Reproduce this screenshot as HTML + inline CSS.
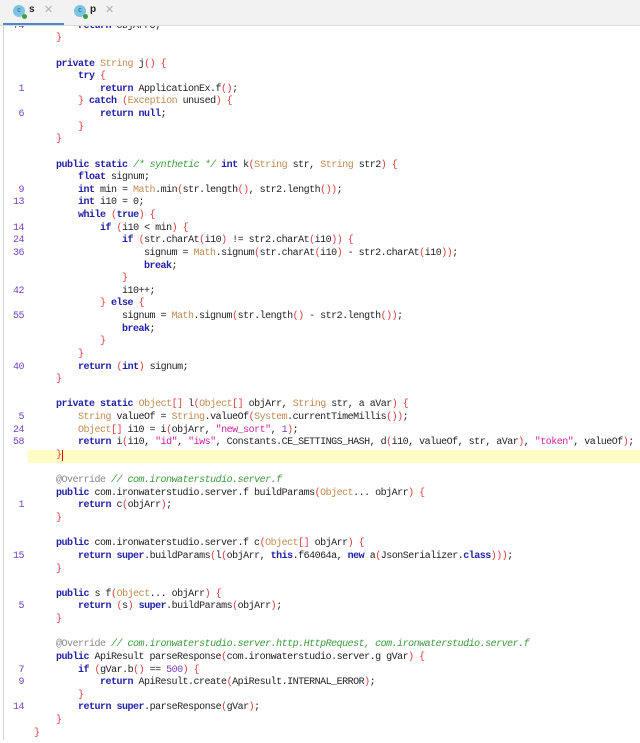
<!DOCTYPE html>
<html><head><meta charset="utf-8"><style>
body{margin:0;width:640px;height:743px;overflow:hidden;background:#fff;position:relative;font-family:"Liberation Mono",monospace}
#tabs{position:absolute;left:0;top:0;width:640px;height:25px;background:#f2f2f2;z-index:2;border-bottom:1px solid #d8d8d8;font-family:"Liberation Sans",sans-serif}
.tab{position:absolute;top:0;height:25px}
.ic{position:absolute;top:5px;width:12px;height:12px;border-radius:50%;background:#7cc4e4;font-size:7px;color:#2a5a80;text-align:center;line-height:12px}
.ic i{position:absolute;right:-2px;bottom:-2px;width:5px;height:5px;border-radius:50%;background:#3aa040}
.tl{position:absolute;top:4px;font-size:10px;font-weight:bold;color:#222}
.x{position:absolute;top:3px;font-size:11px;color:#b0b0b0}
#ul{position:absolute;left:3px;top:23px;width:61px;height:2px;background:#4a88c8}
#code{position:absolute;left:0;top:20.7px;width:640px;font-size:10px;letter-spacing:-0.5px;line-height:12.64px;color:#222}
.l{height:12.64px;position:relative;white-space:pre}
.g{position:absolute;left:0;width:24px;text-align:right;color:#7a3fc0}
.c0{position:absolute;left:12px}
.hl{background:#fdfdc4}
.k{color:#2222aa;font-weight:bold}.t{color:#c08a50}.p{color:#e03c3c}.s{color:#d020a0}.n{color:#7a3fc0}.c{color:#3a9a3a;font-style:italic}.a{color:#888}
#bd{position:absolute;left:3px;top:25px;width:1px;height:715px;background:#d0d0d0}
</style></head><body>
<div id="tabs">
<div class="tab" style="left:13px"><div class="ic">c<i></i></div><div class="tl" style="left:16px">s</div><div class="x" style="left:31px">✕</div></div>
<div class="tab" style="left:74px"><div class="ic">c<i></i></div><div class="tl" style="left:16px">p</div><div class="x" style="left:31px">✕</div></div>
<div id="ul"></div>
</div>
<div id="bd"></div>
<div id="code">
<div class="l"><span class="g">74</span><span class="c0">            <span class="k">return</span> objArr3;</span></div>
<div class="l"><span class="c0">        <span class="p">}</span></span></div>
<div class="l"></div>
<div class="l"><span class="c0">        <span class="k">private</span> <span class="t">String</span> j<span class="p">()</span> <span class="p">{</span></span></div>
<div class="l"><span class="c0">            <span class="k">try</span> <span class="p">{</span></span></div>
<div class="l"><span class="g">1</span><span class="c0">                <span class="k">return</span> ApplicationEx.f<span class="p">()</span>;</span></div>
<div class="l"><span class="c0">            <span class="p">}</span> <span class="k">catch</span> <span class="p">(</span><span class="t">Exception</span> unused<span class="p">)</span> <span class="p">{</span></span></div>
<div class="l"><span class="g">6</span><span class="c0">                <span class="k">return</span> <span class="k">null</span>;</span></div>
<div class="l"><span class="c0">            <span class="p">}</span></span></div>
<div class="l"><span class="c0">        <span class="p">}</span></span></div>
<div class="l"></div>
<div class="l"><span class="c0">        <span class="k">public</span> <span class="k">static</span> <span class="c">/* synthetic */</span> <span class="k">int</span> k<span class="p">(</span><span class="t">String</span> str, <span class="t">String</span> str2<span class="p">)</span> <span class="p">{</span></span></div>
<div class="l"><span class="c0">            <span class="k">float</span> signum;</span></div>
<div class="l"><span class="g">9</span><span class="c0">            <span class="k">int</span> min = <span class="t">Math</span>.min<span class="p">(</span>str.length<span class="p">()</span>, str2.length<span class="p">())</span>;</span></div>
<div class="l"><span class="g">13</span><span class="c0">            <span class="k">int</span> i10 = 0;</span></div>
<div class="l"><span class="c0">            <span class="k">while</span> <span class="p">(</span><span class="k">true</span><span class="p">)</span> <span class="p">{</span></span></div>
<div class="l"><span class="g">14</span><span class="c0">                <span class="k">if</span> <span class="p">(</span>i10 &lt; min<span class="p">)</span> <span class="p">{</span></span></div>
<div class="l"><span class="g">24</span><span class="c0">                    <span class="k">if</span> <span class="p">(</span>str.charAt<span class="p">(</span>i10<span class="p">)</span> != str2.charAt<span class="p">(</span>i10<span class="p">))</span> <span class="p">{</span></span></div>
<div class="l"><span class="g">36</span><span class="c0">                        signum = <span class="t">Math</span>.signum<span class="p">(</span>str.charAt<span class="p">(</span>i10<span class="p">)</span> - str2.charAt<span class="p">(</span>i10<span class="p">))</span>;</span></div>
<div class="l"><span class="c0">                        <span class="k">break</span>;</span></div>
<div class="l"><span class="c0">                    <span class="p">}</span></span></div>
<div class="l"><span class="g">42</span><span class="c0">                    i10++;</span></div>
<div class="l"><span class="c0">                <span class="p">}</span> <span class="k">else</span> <span class="p">{</span></span></div>
<div class="l"><span class="g">55</span><span class="c0">                    signum = <span class="t">Math</span>.signum<span class="p">(</span>str.length<span class="p">()</span> - str2.length<span class="p">())</span>;</span></div>
<div class="l"><span class="c0">                    <span class="k">break</span>;</span></div>
<div class="l"><span class="c0">                <span class="p">}</span></span></div>
<div class="l"><span class="c0">            <span class="p">}</span></span></div>
<div class="l"><span class="g">40</span><span class="c0">            <span class="k">return</span> <span class="p">(</span><span class="k">int</span><span class="p">)</span> signum;</span></div>
<div class="l"><span class="c0">        <span class="p">}</span></span></div>
<div class="l"></div>
<div class="l"><span class="c0">        <span class="k">private</span> <span class="k">static</span> <span class="t">Object</span><span class="p">[]</span> l<span class="p">(</span><span class="t">Object</span><span class="p">[]</span> objArr, <span class="t">String</span> str, a aVar<span class="p">)</span> <span class="p">{</span></span></div>
<div class="l"><span class="g">5</span><span class="c0">            <span class="t">String</span> valueOf = <span class="t">String</span>.valueOf<span class="p">(</span><span class="t">System</span>.currentTimeMillis<span class="p">())</span>;</span></div>
<div class="l"><span class="g">24</span><span class="c0">            <span class="t">Object</span><span class="p">[]</span> i10 = i<span class="p">(</span>objArr, <span class="s">"new_sort"</span>, <span class="n">1</span><span class="p">)</span>;</span></div>
<div class="l"><span class="g">58</span><span class="c0">            <span class="k">return</span> i<span class="p">(</span>i10, <span class="s">"id"</span>, <span class="s">"iws"</span>, Constants.CE_SETTINGS_HASH, d<span class="p">(</span>i10, valueOf, str, aVar<span class="p">)</span>, <span class="s">"token"</span>, valueOf<span class="p">)</span>;</span></div>
<div class="l hl" style="margin-left:28px"><span class="c0" style="left:-16px">        <span class="p">}</span><span style="border-left:1.5px solid #e00"></span></span></div>
<div class="l"></div>
<div class="l"><span class="c0">        <span class="a">@Override</span> <span class="c">// com.ironwaterstudio.server.f</span></span></div>
<div class="l"><span class="c0">        <span class="k">public</span> com.ironwaterstudio.server.f buildParams<span class="p">(</span><span class="t">Object</span>... objArr<span class="p">)</span> <span class="p">{</span></span></div>
<div class="l"><span class="g">1</span><span class="c0">            <span class="k">return</span> c<span class="p">(</span>objArr<span class="p">)</span>;</span></div>
<div class="l"><span class="c0">        <span class="p">}</span></span></div>
<div class="l"></div>
<div class="l"><span class="c0">        <span class="k">public</span> com.ironwaterstudio.server.f c<span class="p">(</span><span class="t">Object</span><span class="p">[]</span> objArr<span class="p">)</span> <span class="p">{</span></span></div>
<div class="l"><span class="g">15</span><span class="c0">            <span class="k">return</span> <span class="k">super</span>.buildParams<span class="p">(</span>l<span class="p">(</span>objArr, <span class="k">this</span>.f64064a, <span class="k">new</span> a<span class="p">(</span>JsonSerializer.<span class="k">class</span><span class="p">)))</span>;</span></div>
<div class="l"><span class="c0">        <span class="p">}</span></span></div>
<div class="l"></div>
<div class="l"><span class="c0">        <span class="k">public</span> s f<span class="p">(</span><span class="t">Object</span>... objArr<span class="p">)</span> <span class="p">{</span></span></div>
<div class="l"><span class="g">5</span><span class="c0">            <span class="k">return</span> <span class="p">(</span>s<span class="p">)</span> <span class="k">super</span>.buildParams<span class="p">(</span>objArr<span class="p">)</span>;</span></div>
<div class="l"><span class="c0">        <span class="p">}</span></span></div>
<div class="l"></div>
<div class="l"><span class="c0">        <span class="a">@Override</span> <span class="c">// com.ironwaterstudio.server.http.HttpRequest, com.ironwaterstudio.server.f</span></span></div>
<div class="l"><span class="c0">        <span class="k">public</span> ApiResult parseResponse<span class="p">(</span>com.ironwaterstudio.server.g gVar<span class="p">)</span> <span class="p">{</span></span></div>
<div class="l"><span class="g">7</span><span class="c0">            <span class="k">if</span> <span class="p">(</span>gVar.b<span class="p">()</span> == <span class="n">500</span><span class="p">)</span> <span class="p">{</span></span></div>
<div class="l"><span class="g">9</span><span class="c0">                <span class="k">return</span> ApiResult.create<span class="p">(</span>ApiResult.INTERNAL_ERROR<span class="p">)</span>;</span></div>
<div class="l"><span class="c0">            <span class="p">}</span></span></div>
<div class="l"><span class="g">14</span><span class="c0">            <span class="k">return</span> <span class="k">super</span>.parseResponse<span class="p">(</span>gVar<span class="p">)</span>;</span></div>
<div class="l"><span class="c0">        <span class="p">}</span></span></div>
<div class="l"><span class="c0">    <span class="p">}</span></span></div>
</div>
</body></html>
